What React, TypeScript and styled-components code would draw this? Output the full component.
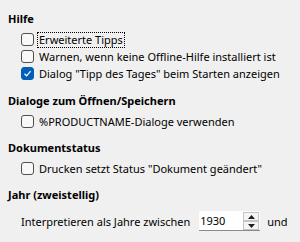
import React from 'react';
import styled, { createGlobalStyle } from 'styled-components';

const GlobalStyle = createGlobalStyle`
  html, body {
    margin: 0;
    padding: 0;
    background: #f0f0f0;
  }
  body {
    font-family: 'Noto Sans', 'Open Sans', sans-serif;
    font-size: 11px;
    color: #000;
  }
`;

const Page = styled.div`
  width: 300px;
  height: 242px;
  padding: 10px 8px 0 8px;
  box-sizing: border-box;
  display: flex;
  flex-direction: column;
`;

const Section = styled.div<{ gap?: number }>`
  display: flex;
  flex-direction: column;
  margin-bottom: ${(p) => p.gap ?? 9}px;
`;

const Heading = styled.div`
  font-weight: 700;
  height: 18px;
  line-height: 18px;
  margin-bottom: 3px;
`;

const Row = styled.label`
  display: flex;
  align-items: center;
  height: 17px;
  padding-left: 13px;
  white-space: nowrap;
`;

const Box = styled.span<{ checked?: boolean }>`
  width: 13px;
  height: 13px;
  box-sizing: border-box;
  border-radius: 3px;
  border: 1px solid ${(p) => (p.checked ? '#005fb8' : '#505050')};
  background: ${(p) => (p.checked ? '#005fb8' : '#f8f8f8')};
  display: flex;
  align-items: center;
  justify-content: center;
  margin-right: 3px;
  flex-shrink: 0;
`;

const Label = styled.span<{ focused?: boolean }>`
  padding: 0 1px;
  line-height: 14px;
  border: 1px dotted ${(p) => (p.focused ? '#000' : 'transparent')};
`;

const SpinRow = styled.div`
  display: flex;
  align-items: center;
  padding-left: 13px;
  margin-top: 3px;
  height: 22px;
  white-space: nowrap;
`;

const SpinBox = styled.div`
  display: flex;
  align-items: stretch;
  height: 20px;
  margin: 0 7px 0 9px;
  box-sizing: border-box;
  border-bottom: 1px solid #8a8a8a;
  background: #fff;
`;

const SpinValue = styled.div`
  width: 43px;
  padding-left: 1px;
  display: flex;
  align-items: center;
`;

const SpinButtons = styled.div`
  display: flex;
  flex-direction: column;
  width: 16px;
  padding: 1px 1px 0 0;
  gap: 0;
`;

const SpinButton = styled.div`
  flex: 1;
  display: flex;
  align-items: center;
  justify-content: center;
  background: #f5f5f5;
  border: 1px solid #c4c4c4;
`;

const Check = () => (
  <svg width="9" height="9" viewBox="0 0 9 9">
    <path d="M1.5 4.8 L3.6 6.8 L7.6 2.2" fill="none" stroke="#fff" strokeWidth="1.2" />
  </svg>
);

const CheckRow: React.FC<{ text: string; checked?: boolean; focused?: boolean }> = ({ text, checked, focused }) => (
  <Row>
    <Box checked={checked}>{checked && <Check />}</Box>
    <Label focused={focused}>{text}</Label>
  </Row>
);

const Arrow: React.FC<{ up?: boolean }> = ({ up }) => (
  <svg width="7" height="4" viewBox="0 0 7 4">
    <path d={up ? 'M0 4 L3.5 0 L7 4 Z' : 'M0 0 L3.5 4 L7 0 Z'} fill="#202020" />
  </svg>
);

export default function App() {
  return (
    <>
      <GlobalStyle />
      <Page>
        <Section gap={10}>
          <Heading>Hilfe</Heading>
          <CheckRow text="Erweiterte Tipps" focused />
          <CheckRow text="Warnen, wenn keine Offline-Hilfe installiert ist" />
          <CheckRow text={'Dialog "Tipp des Tages" beim Starten anzeigen'} checked />
        </Section>
        <Section>
          <Heading>Dialoge zum Öffnen/Speichern</Heading>
          <CheckRow text="%PRODUCTNAME-Dialoge verwenden" />
        </Section>
        <Section>
          <Heading>Dokumentstatus</Heading>
          <CheckRow text={'Drucken setzt Status "Dokument geändert"'} />
        </Section>
        <Section>
          <Heading>Jahr (zweistellig)</Heading>
          <SpinRow>
            <span>Interpretieren als Jahre zwischen</span>
            <SpinBox>
              <SpinValue>1930</SpinValue>
              <SpinButtons>
                <SpinButton><Arrow up /></SpinButton>
                <SpinButton><Arrow /></SpinButton>
              </SpinButtons>
            </SpinBox>
            <span>und</span>
          </SpinRow>
        </Section>
      </Page>
    </>
  );
}
